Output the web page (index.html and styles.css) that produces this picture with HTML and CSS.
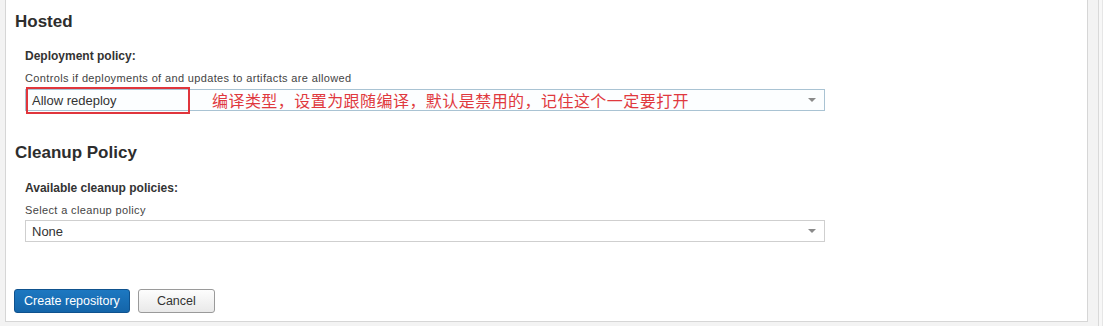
FILE: index.html
```html
<!DOCTYPE html>
<html lang="en">
<head>
  <meta charset="UTF-8" />
  <title>Create repository</title>
  <link rel="stylesheet" href="styles.css">
</head>
<body>
  <div class="page">
    <div class="panel">
      <h2>Hosted</h2>
      <div class="field">
        <div class="label">Deployment policy:</div>
        <div class="help">Controls if deployments of and updates to artifacts are allowed</div>
        <div class="select focused">
          <span>Allow redeploy</span>
          <span class="arrow"></span>
          <!-- annotation drawn over the select -->
          <div class="mark"></div>
          <div class="note">编译类型，设置为跟随编译，默认是禁用的，记住这个一定要打开</div>
        </div>
      </div>

      <h2 class="section">Cleanup Policy</h2>
      <div class="field">
        <div class="label">Available cleanup policies:</div>
        <div class="help">Select a cleanup policy</div>
        <div class="select">
          <span>None</span>
          <span class="arrow"></span>
        </div>
      </div>

      <div class="buttons">
        <button class="primary">Create repository</button>
        <button>Cancel</button>
      </div>
    </div>
    <div class="rail"></div>
  </div>
</body>
</html>
```

FILE: styles.css
```css
body {
  margin: 0;
  background: #f3f3f3;
  font-family: "Liberation Sans", Arial, sans-serif;
  color: #333;
}
.page {
  display: flex;
  padding-left: 5px;
  height: 326px;
}
.panel {
  width: 1083px;
  height: 322px;
  box-sizing: border-box;
  background: #fff;
  border: 1px solid #d6d6d6;
  border-top: none;
  padding: 12px 9px 9px 9px;
}
.rail {
  width: 3px;
  margin-left: 10px;
  border-left: 1px solid #d9d9d9;
  border-right: 1px solid #e6e6e6;
  background: #f7f7f7;
}
h2 {
  margin: 0;
  font-size: 17px;
  line-height: 20px;
  font-weight: bold;
  color: #2d2d2d;
}
h2.section {
  margin-top: 32px;
}
.field {
  margin-left: 10px;
  margin-top: 16px;
  width: 800px;
}
h2.section + .field {
  margin-top: 17px;
}
.label {
  font-size: 12px;
  line-height: 16px;
  font-weight: bold;
  color: #333;
}
.help {
  font-size: 11px;
  line-height: 14px;
  margin-top: 7px;
  letter-spacing: 0.36px;
  color: #444;
}
.select {
  position: relative;
  height: 22px;
  box-sizing: border-box;
  border: 1px solid #cfcfcf;
  margin-top: 3px;
  padding: 0 6px;
  display: flex;
  align-items: center;
  justify-content: space-between;
  font-size: 13px;
  color: #333;
  background: #fff;
}
.select.focused {
  margin-top: 4px;
  border-color: #a9c3d3;
  background: #fcfeff;
}
.arrow {
  width: 0;
  height: 0;
  border-left: 4px solid transparent;
  border-right: 4px solid transparent;
  border-top: 4px solid #8a8a8a;
  margin-right: 2px;
}
.mark {
  position: absolute;
  left: 0;
  top: -3px;
  width: 164px;
  height: 27px;
  box-sizing: border-box;
  border: 2px solid #e0353c;
}
.note {
  position: absolute;
  left: 186px;
  top: 0;
  line-height: 20px;
  font-size: 16px;
  color: #e0393e;
  font-family: "Noto Sans CJK SC", sans-serif;
  letter-spacing: 0.45px;
}
.buttons {
  margin-top: 47px;
  display: flex;
  gap: 8px;
  margin-left: -1px;
}
button {
  height: 24px;
  font-family: "Liberation Sans", Arial, sans-serif;
  font-size: 12.5px;
  color: #333;
  padding: 0 18px;
  border: 1px solid #9a9a9a;
  border-radius: 3px;
  background: linear-gradient(#fdfdfd, #e9e9e9);
}
button.primary {
  padding: 0 9px;
  color: #fff;
  border-color: #0f528e;
  background: linear-gradient(#1d78c1, #1465a9);
}
```
